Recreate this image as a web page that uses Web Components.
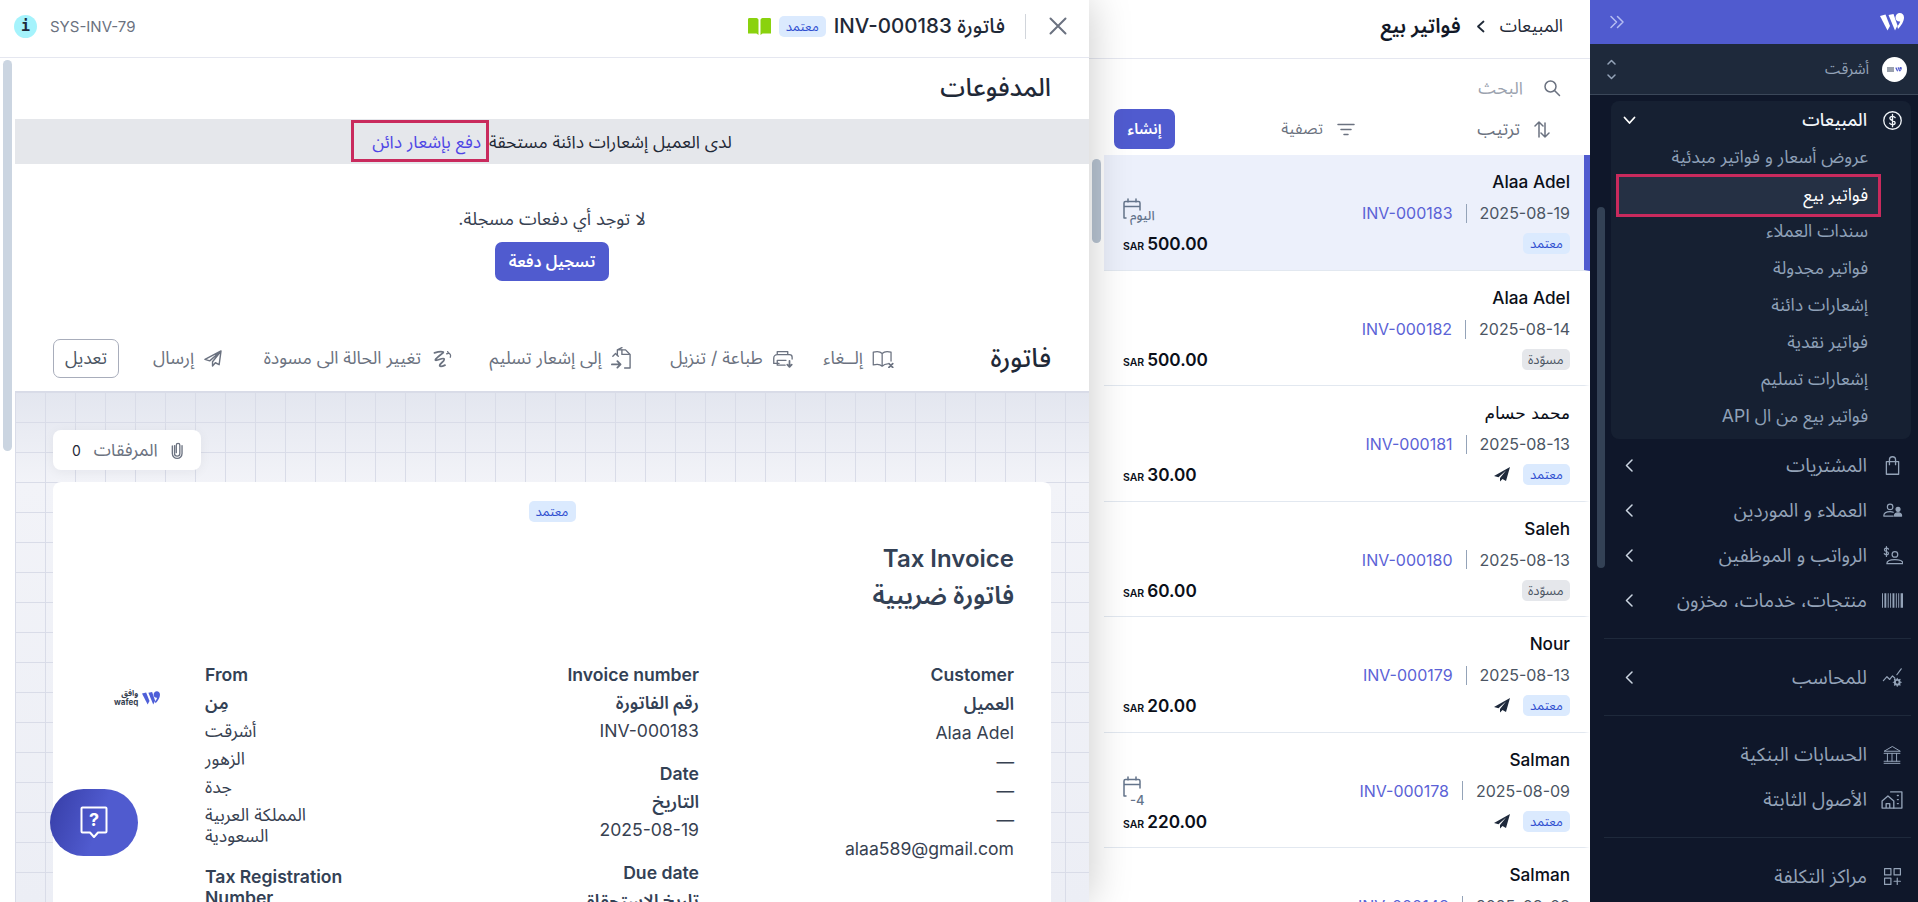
<!DOCTYPE html>
<html lang="ar" dir="rtl">
<head>
<meta charset="utf-8">
<title>فواتير بيع</title>
<style>
  html, body { margin: 0; height: 902px; overflow: hidden; background: #fff; }
  body { font-family: Inter, "Noto Sans Arabic", "Noto Sans", "DejaVu Sans", sans-serif; font-size: 16px; }
</style>
</head>
<body>
<app-shell>
  <app-sidebar slot="sidebar"></app-sidebar>
  <invoice-list slot="list"></invoice-list>
  <invoice-drawer slot="drawer"></invoice-drawer>
</app-shell>
<help-fab></help-fab>

<script>
// Icons shared by the components below.
const svg = (w, h, box, body, extra = '') =>
  `<svg width="${w}" height="${h}" viewBox="${box}" fill="none" stroke="currentColor" stroke-width="1.5" stroke-linecap="round" stroke-linejoin="round" ${extra}>${body}</svg>`

const wafeqMark = (w, h, color) =>
  `<svg width="${w}" height="${h}" viewBox="0 0 24 18" fill="${color}"><path d="M0 3 5.500 1.500 10 13l-2.500 4.500z"/><path d="M8.500 2 13.500 1 17.500 12.500 15 17.500z"/><path d="M15.500 4.500c0-2.500 2-4.500 4.300-4.500S24 1.700 24 4.500c0 4-3 8.500-6 11.500l-.7-2.500c1.300-1.500 2.400-3.300 2.900-5-2.200.5-4.700-1-4.700-4z"/></svg>`

const navIcons = {
  dollar: svg(21, 21, '0 0 24 24', '<circle cx="12" cy="12" r="10"/><path d="M15 8.700C14.400 7.700 13.300 7.200 12 7.200c-1.700 0-3 .9-3 2.300 0 3.200 6 1.800 6 5 0 1.400-1.400 2.300-3 2.300-1.400 0-2.600-.5-3.200-1.600M12 5v14"/>'),
  bag: svg(21, 21, '0 0 24 24', '<path d="M5 7.500h14v14.500H5z"/><path d="M8.500 11V5.500a3.500 3.500 0 0 1 7 0V11"/>'),
  people: svg(21, 19, '0 0 26 24', '<circle cx="10" cy="7.500" r="3.500"/><path d="M2 19c0-4 3.500-5.500 8-5.500 1.500 0 3 .2 4 .7M2 19h12"/><circle cx="20" cy="10.500" r="2.500" fill="currentColor"/><path d="M15.500 19c0-2.500 2-4 4.500-4s4.500 1.500 4.500 4z" fill="currentColor"/>'),
  payroll: svg(21, 20, '0 0 26 24', '<path d="M8 3.500C7.500 2.600 6.500 2.200 5.500 2.200 4 2.200 3 3 3 4.200c0 2.800 5 1.600 5 4.300C8 9.800 6.800 10.500 5.500 10.500c-1.200 0-2.200-.5-2.700-1.400M5.500 .5v12"/><circle cx="16" cy="10" r="3.500"/><path d="M6 21.500c0-3.500 4.500-5 10-5s10 1.500 10 5z"/>'),
  barcode: `<svg width="21" height="15" viewBox="0 0 22 15" fill="currentColor"><path d="M0 0h1v15H0zM2.500 0h2v15h-2zM6 0h1v15H6zM8.500 0h1v15h-1zM11 0h2v15h-2zM14.500 0h1v15h-1zM17 0h1v15h-1zM19.500 0h2.500v15h-2.500z"/></svg>`,
  gear: svg(21, 19, '0 0 26 24', '<path d="M1.500 16 6 11l3.500 3.500L13 10l3 3M18.500 8.500 24 1"/><circle cx="19" cy="18" r="3" stroke-width="2.500"/><path d="M19 13v1.500M19 21.500V23M14 18h1.500M22.500 18H24M15.500 14.500l1 1M21.500 20.500l1 1M22.500 14.500l-1 1M16.500 20.500l-1 1"/>'),
  bank: svg(20, 20, '0 0 24 24', '<path d="M12 2 2.500 7.500h19zM2.500 10h19M2.500 22h19M2.500 19.500h19M6.500 10v9.500M12 10v9.500M17.500 10v9.500" stroke-width="1.200"/>'),
  building: svg(22, 18, '0 0 24 20', '<path d="M1 19v-8l6.500-5.500L14 11v8zM5.500 19v-5h4v5"/><path d="M10.500 1H23v18h-9M18 5h1M18 9.500h1M18 14h1"/>'),
  plusgrid: svg(19, 19, '0 0 24 24', '<rect x="2" y="2" width="8" height="8"/><rect x="14" y="2" width="8" height="8"/><rect x="2" y="14" width="8" height="8"/><path d="M18 14v8M14 18h8"/>')
}

const actionIcons = {
  cancel: svg(22, 18, '0 0 26 21', '<path d="M12 4C9.500 1.500 5 1.500 1.500 2.500v15c3.500-1 8-1 10.500 1.500 2.500-2.500 5-2.800 6.500-2.800M12 4c2.500-2.500 7-2.500 10.500-1.500V13M12 4v15"/><path d="M20 16l4.500 4.500M24.500 16 20 20.500" stroke-width="2"/>'),
  print: svg(21, 18, '0 0 24 20', '<path d="M6 5V1.500h12V5M8 15H2V9a4 4 0 0 1 4-4h14a3 3 0 0 1 3 3v2M6 11.500h10M6 11.500V17h9"/><path d="M20 12v7M17.500 16.500 20 19l2.500-2.500" stroke-width="2"/>'),
  deliver: svg(20, 23, '0 0 22 25', '<path d="M7 9V3l5-2.500M7 3h9l5 5v15H15"/><path d="M12 3v5h8M2 10l3-3 3 3" /><path d="M1 19h9M7 15.500 10.500 19 7 22.500" stroke-width="2"/>'),
  revert: svg(21, 18, '0 0 24 20', '<path d="M4 3c3-1 8-2 10-1 1 1-8 6-9 9 0 2 9-3 10-1 1 3-6 5-5 8 1 1 4 0 6-1" stroke-width="2"/><path d="M20 3c2 1 3 3 2 5M19 1.500l1 2-2 .5"/>'),
  send: svg(18, 17, '0 0 19 18', '<path d="M18 1 1 10l5 1.500L18 1l-9 11.500V17l3-3.500 4 2z"/>')
}

/**
 * Two-column page frame. The drawer lies over the list through its shadow.
 */
customElements.define('app-shell', class extends HTMLElement {
  constructor () {
    super()
    this.attachShadow({ mode: 'open' }).innerHTML = `
      <style>
        :host { display: grid; grid-template-columns: 328px 501px 1089px; height: 902px; overflow: hidden; }
        ::slotted([slot="drawer"]) { position: relative; z-index: 2; }
      </style>
      <slot name="sidebar"></slot>
      <slot name="list"></slot>
      <slot name="drawer"></slot>`
  }
})

customElements.define('status-badge', class extends HTMLElement {
  constructor () {
    super()
    this.attachShadow({ mode: 'open' }).innerHTML = `
      <style>
        :host { display: inline-flex; align-items: center; justify-content: center; height: 21px; padding: 0 6px; min-width: 35px;
          border-radius: 5px; font-size: 13px; background: #dbeafe; color: #2f4fd0; line-height: 1; }
        :host([draft]) { background: #e5e7eb; color: #4b5563; padding: 0 6.500px; }
      </style>
      <slot></slot>`
  }
})

customElements.define('nav-item', class extends HTMLElement {
  constructor () {
    super()
    const chevron = this.hasAttribute('chevron')
      ? svg(8, 13, '0 0 8 13', '<path d="M7 1 1.500 6.500 7 12" stroke-width="1.500"/>', 'class="chev"') : ''
    this.attachShadow({ mode: 'open' }).innerHTML = `
      <style>
        :host { display: flex; align-items: center; height: 45px; color: #94a3b8; font-size: 19px; padding-left: 14px; white-space: nowrap; }
        .icon { width: 24px; display: flex; justify-content: center; margin-right: 7px; margin-left: 13px; }
        .chev { margin-right: auto; color: #cbd5e1; }
      </style>
      <span class="icon">${navIcons[this.getAttribute('icon')]}</span>
      <slot></slot>
      ${chevron}`
  }
})

customElements.define('sub-item', class extends HTMLElement {
  constructor () {
    super()
    this.attachShadow({ mode: 'open' }).innerHTML = `
      <style>
        :host { display: flex; align-items: center; height: 37px; box-sizing: border-box; padding-right: 13px; margin: 0 30px 0 5px;
          color: #8fa1b8; font-size: 17.600px; white-space: nowrap; }
        :host([active]) { height: 43px; margin-top: -2px; margin-bottom: -4px; border: 3px solid #c92a5d; padding-right: 10px;
          background: #253044; color: #fff; position: relative; }
      </style>
      <slot></slot>`
  }
})

customElements.define('app-sidebar', class extends HTMLElement {
  constructor () {
    super()
    this.attachShadow({ mode: 'open' }).innerHTML = `
      <style>
        :host { display: flex; flex-direction: column; height: 902px; background: #0f172a; overflow: hidden; }
        .brand { height: 44px; flex: none; background: #505bcf; display: flex; align-items: center; justify-content: space-between; padding: 0 14px 0 19px; box-sizing: border-box; color: #b6bdf2; }
        .org { height: 51px; flex: none; box-sizing: border-box; background: #1e293b; border-bottom: 1px solid #3b4759; display: flex; align-items: center; padding: 0 11px 0 17px; color: #94a3b8; font-size: 15px; }
        .avatar { width: 25px; height: 25px; border-radius: 50%; background: #fff; display: flex; align-items: center; justify-content: center; gap: 1px; margin-left: 13px; }
        .avatar i { width: 7px; height: 5px; background: #9aa1ad; }
        .updown { margin-right: auto; display: flex; color: #94a3b8; }
        .nav { flex: 1; display: flex; min-height: 0; }
        .main { width: 300px; margin-right: 7px; padding-top: 6px; }
        .gutter { width: 21px; margin-right: auto; }
        .thumb { width: 8px; margin: 112px 6px 0 0; height: 361px; border-radius: 4px; background: #334155; }
        .group { background: #162032; border-radius: 8px; padding-bottom: 3px; height: 338px; box-sizing: border-box; margin-bottom: 4px; }
        .group-head { height: 38px; display: flex; align-items: center; color: #f1f5f9; font-size: 17.600px; font-weight: 500; padding-left: 12px; }
        .group-head .icon { width: 24px; display: flex; justify-content: center; margin-right: 7px; margin-left: 13px; }
        .group-head .chev { margin-right: auto; color: #fff; }
        .rule { height: 1px; background: #1e293b; margin: 15px 0 16px -7px; }
      </style>
      <div class="brand">
        ${wafeqMark(24, 18, '#fff')}
        ${svg(16, 14, '0 0 16 14', '<path d="M2 1.500 7.500 7 2 12.500M8.500 1.500 14 7 8.500 12.500"/>')}
      </div>
      <div class="org">
        <span class="avatar">${wafeqMark(7, 5, '#505bcf')}<i></i></span>
        <span>أشرقت</span>
        <span class="updown">${svg(9, 23, '0 0 9 23', '<path d="M1 6l3.500-3.500L8 6M1 17l3.500 3.500L8 17"/>')}</span>
      </div>
      <div class="nav">
        <div class="main">
          <div class="group">
            <div class="group-head">
              <span class="icon">${navIcons.dollar}</span>
              <span>المبيعات</span>
              ${svg(13, 9, '0 0 13 9', '<path d="M1.500 1.500 6.500 7l5-5.500" stroke-width="1.800"/>', 'class="chev"')}
            </div>
            <sub-item>عروض أسعار و فواتير مبدئية</sub-item>
            <sub-item active>فواتير بيع</sub-item>
            <sub-item>سندات العملاء</sub-item>
            <sub-item>فواتير مجدولة</sub-item>
            <sub-item>إشعارات دائنة</sub-item>
            <sub-item>فواتير نقدية</sub-item>
            <sub-item>إشعارات تسليم</sub-item>
            <sub-item>فواتير بيع من ال API</sub-item>
          </div>
          <nav-item icon="bag" chevron>المشتريات</nav-item>
          <nav-item icon="people" chevron>العملاء و الموردين</nav-item>
          <nav-item icon="payroll" chevron>الرواتب و الموظفين</nav-item>
          <nav-item icon="barcode" chevron>منتجات، خدمات، مخزون</nav-item>
          <div class="rule"></div>
          <nav-item icon="gear" chevron>للمحاسب</nav-item>
          <div class="rule"></div>
          <nav-item icon="bank">الحسابات البنكية</nav-item>
          <nav-item icon="building">الأصول الثابتة</nav-item>
          <div class="rule"></div>
          <nav-item icon="plusgrid">مراكز التكلفة</nav-item>
        </div>
        <div class="gutter"><div class="thumb"></div></div>
      </div>`
  }
})

/**
 * One row of the invoice list, filled from its attributes.
 */
customElements.define('invoice-row', class extends HTMLElement {
  constructor () {
    super()
    const attr = name => this.getAttribute(name)
    const due = attr('due')
      ? `<span class="due">${svg(18, 21, '0 0 18 21', '<path d="M5 1v3M13 1v3M1 20V5a1.500 1.500 0 0 1 1.500-1.500h13A1.500 1.500 0 0 1 17 5v7M1 8.500h16M1 20h2"/>')}<span class="due-label" dir="${attr('due-dir') || 'rtl'}">${attr('due')}</span></span>`
      : ''
    const plane = this.hasAttribute('sent')
      ? `<svg class="plane" width="16" height="15" viewBox="0 0 16 15" fill="#1e293b"><path d="M16 0 0 9l4.500 1.300L12 3.500 6 11v3.500L8.500 12l3.500 2z"/></svg>`
      : ''
    this.attachShadow({ mode: 'open' }).innerHTML = `
      <style>
        :host { display: block; box-sizing: border-box; height: 115.400px; padding: 15px 14px 0 19px; border-right: 6px solid transparent; border-bottom: 1px solid #e2e8f0; }
        :host([selected]) { background: #ecf0fb; border-right-color: #505bcf; height: 116px; }
        .name { font-size: 17.200px; line-height: 24px; font-weight: 500; color: #0b0f19; }
        .name.naskh { font-family: "DejaVu Sans", sans-serif; font-weight: 400; font-size: 17px; }
        .meta { display: flex; align-items: center; height: 24px; margin-top: 7px; font-size: 16px; color: #4b5563; }
        .sep { width: 1px; height: 19px; background: #94a3b8; margin: 0 13px; }
        .num { color: #5b62d6; }
        .due { margin-right: auto; position: relative; width: 32px; height: 24px; color: #64748b; display: block; }
        .due svg { position: absolute; left: 0; top: -3px; }
        .due-label { position: absolute; left: 7px; bottom: -5px; font-size: 13px; font-weight: 500; white-space: nowrap; }
        .foot { display: flex; align-items: center; height: 21px; margin-top: 8px; }
        .plane { margin-right: 13px; }
        .amount { margin-right: auto; display: flex; align-items: baseline; gap: 3px; direction: ltr; color: #0b0f19; font-size: 17.200px; font-weight: 600; }
        .cur { font-size: 10.500px; font-weight: 600; }
      </style>
      <div class="name ${this.hasAttribute('naskh') ? 'naskh' : ''}">${attr('name')}</div>
      <div class="meta"><span>${attr('date')}</span><span class="sep"></span><span class="num">${attr('num')}</span>${due}</div>
      <div class="foot">
        <status-badge ${attr('status') === 'draft' ? 'draft' : ''}>${attr('status') === 'draft' ? 'مسوّدة' : 'معتمد'}</status-badge>
        ${plane}
        <span class="amount"><span class="cur">SAR</span><span>${attr('amount')}</span></span>
      </div>`
  }
})

customElements.define('invoice-list', class extends HTMLElement {
  constructor () {
    super()
    this.attachShadow({ mode: 'open' }).innerHTML = `
      <style>
        :host { display: flex; flex-direction: column; height: 902px; background: #fff; overflow: hidden; }
        .crumbs { height: 59px; flex: none; box-sizing: border-box; border-bottom: 1px solid #e5e7f0; display: flex; align-items: center; padding: 0 27px 5px 0; gap: 15px; color: #1f2937; font-size: 17.600px; }
        .crumbs b { font-size: 20.500px; font-weight: 600; color: #111827; }
        .search { height: 50px; flex: none; display: flex; align-items: center; padding: 8px 29px 0 0; box-sizing: border-box; gap: 20px; color: #9ca3af; font-size: 17.400px; }
        .search svg { color: #6b7280; }
        .tools { height: 46px; flex: none; display: flex; align-items: flex-start; justify-content: space-between; padding: 0 40px 0 25px; color: #6b7280; font-size: 17.600px; }
        .tool { display: flex; align-items: center; gap: 14px; height: 40px; }
        .tool.filter { margin-right: 16px; font-size: 16px; }
        .create { width: 61px; height: 40px; border-radius: 7px; background: #505bcf; color: #fff; font-size: 15px; font-weight: 600; display: flex; align-items: center; justify-content: center; }
        .body { flex: 1; display: flex; min-height: 0; }
        .rows { flex: 1; min-width: 0; }
        .gutter { width: 15px; flex: none; }
        .thumb { width: 9px; height: 84px; margin: 4px 3px 0; border-radius: 5px; background: #b8c4d2; }
      </style>
      <div class="crumbs">
        <span>المبيعات</span>
        ${svg(9, 13, '0 0 9 13', '<path d="M7.500 1.500 2 6.500l5.500 5" stroke-width="1.800"/>')}
        <b>فواتير بيع</b>
      </div>
      <div class="search">
        ${svg(18, 18, '0 0 18 18', '<circle cx="7.500" cy="7.500" r="5.500"/><path d="M11.500 11.500l5 5"/>')}
        <span>البحث</span>
      </div>
      <div class="tools">
        <span class="tool">${svg(16, 19, '0 0 16 19', '<path d="M5 17V2M1 6l4-4 4 4M11 3v14M7 13l4 4 4-4"/>')}<span>ترتيب</span></span>
        <span class="tool filter">${svg(18, 13, '0 0 18 13', '<path d="M1 1.500h16M4 6.500h10M7 11.500h4"/>')}<span>تصفية</span></span>
        <span class="create">إنشاء</span>
      </div>
      <div class="body">
        <div class="rows">
          <invoice-row selected name="Alaa Adel" date="2025-08-19" num="INV-000183" status="ok" amount="500.00" due="اليوم"></invoice-row>
          <invoice-row name="Alaa Adel" date="2025-08-14" num="INV-000182" status="draft" amount="500.00"></invoice-row>
          <invoice-row naskh name="محمد حسام" date="2025-08-13" num="INV-000181" status="ok" sent amount="30.00"></invoice-row>
          <invoice-row name="Saleh" date="2025-08-13" num="INV-000180" status="draft" amount="60.00"></invoice-row>
          <invoice-row name="Nour" date="2025-08-13" num="INV-000179" status="ok" sent amount="20.00"></invoice-row>
          <invoice-row name="Salman" date="2025-08-09" num="INV-000178" status="ok" sent amount="220.00" due="-4" due-dir="ltr"></invoice-row>
          <invoice-row name="Salman" date="2025-08-08" num="INV-000148" status="ok" sent amount="220.00"></invoice-row>
        </div>
        <div class="gutter"><div class="thumb"></div></div>
      </div>`
  }
})

customElements.define('action-button', class extends HTMLElement {
  constructor () {
    super()
    this.attachShadow({ mode: 'open' }).innerHTML = `
      <style>
        :host { display: inline-flex; align-items: center; gap: 9.500px; color: #6b7280; font-size: 17.600px; white-space: nowrap; }
        svg { flex: none; }
      </style>
      ${actionIcons[this.getAttribute('icon')]}
      <slot></slot>`
  }
})

customElements.define('detail-line', class extends HTMLElement {
  constructor () {
    super()
    this.attachShadow({ mode: 'open' }).innerHTML = `
      <style>
        :host { display: block; padding: 3.500px 0; line-height: 21px; font-size: 17.600px; color: #374151; }
        :host([label]) { font-weight: 600; color: #334155; }
        :host([gap]) { margin-top: 15px; }
        :host([wide]) { padding: 4px 0; }
      </style>
      <slot></slot>`
  }
})

customElements.define('invoice-card', class extends HTMLElement {
  constructor () {
    super()
    this.attachShadow({ mode: 'open' }).innerHTML = `
      <style>
        :host { display: block; flex: none; background: #fff; border-radius: 8px 8px 0 0; padding: 19px 37px 0 61px; }
        .center { display: flex; justify-content: center; margin-left: -24px; }
        h2 { margin: 0; font-size: 24px; line-height: 36px; font-weight: 600; color: #334155; }
        h2.ar { font-size: 25px; }
        .titles { margin-top: 19px; }
        .cols { margin-top: 47px; display: grid; grid-template-columns: 315px 344px 150px 91px; }
        .from { text-align: left; }
        .logo { display: flex; justify-content: flex-start; align-items: center; gap: 4px; direction: ltr; height: 20px; margin-top: 28px; }
        .logo span { display: flex; flex-direction: column; align-items: flex-end; font-size: 8px; line-height: 9px; font-weight: 700; color: #374151; }
      </style>
      <div class="center"><status-badge>معتمد</status-badge></div>
      <div class="titles"><h2>Tax Invoice</h2><h2 class="ar">فاتورة ضريبية</h2></div>
      <div class="cols">
        <div>
          <detail-line label wide>Customer</detail-line>
          <detail-line label wide>العميل</detail-line>
          <detail-line wide>Alaa Adel</detail-line>
          <detail-line wide>—</detail-line>
          <detail-line wide>—</detail-line>
          <detail-line wide>—</detail-line>
          <detail-line wide>alaa589@gmail.com</detail-line>
        </div>
        <div>
          <detail-line label>Invoice number</detail-line>
          <detail-line label>رقم الفاتورة</detail-line>
          <detail-line>INV-000183</detail-line>
          <detail-line label gap>Date</detail-line>
          <detail-line label>التاريخ</detail-line>
          <detail-line>2025-08-19</detail-line>
          <detail-line label gap>Due date</detail-line>
          <detail-line label>تاريخ الاستحقاق</detail-line>
        </div>
        <div class="from">
          <detail-line label>From</detail-line>
          <detail-line label>مِن</detail-line>
          <detail-line>أشرقت</detail-line>
          <detail-line>الزهور</detail-line>
          <detail-line>جدة</detail-line>
          <detail-line>المملكة العربية السعودية</detail-line>
          <detail-line label gap style="margin-top:13px">Tax Registration Number</detail-line>
        </div>
        <div class="logo"><span><i style="font-style:normal">وافق</i><i style="font-style:normal">wafeq</i></span>${wafeqMark(18, 14, '#4f5fd8')}</div>
      </div>`
  }
})

customElements.define('invoice-drawer', class extends HTMLElement {
  constructor () {
    super()
    this.attachShadow({ mode: 'open' }).innerHTML = `
      <style>
        :host { display: flex; flex-direction: column; height: 902px; background: #fff; box-shadow: 0 0 40px rgba(0, 0, 0, .22); overflow: hidden; }
        header { height: 58px; flex: none; box-sizing: border-box; border-bottom: 1px solid #e5e7f0; display: flex; align-items: center; padding: 0 22px 5px 14px; }
        header .close { color: #6b7280; }
        header .bar { width: 1px; height: 25px; background: #d1d5db; margin: 0 23px 0 20px; }
        header h1 { margin: 0 0 0 8px; font-size: 20.500px; font-weight: 500; color: #1f2937; }
        header .book { margin-right: 8px; }
        .sys { margin-right: auto; display: flex; align-items: center; gap: 13px; direction: ltr; color: #6b7280; font-size: 15px; }
        .sys i { width: 23px; height: 23px; border-radius: 50%; background: #a5f3fc; color: #1e293b; font: 700 15px "DejaVu Sans Mono", monospace; display: flex; align-items: center; justify-content: center; }
        .body { flex: 1; display: flex; min-height: 0; }
        .gutter { width: 15px; flex: none; }
        .thumb { width: 9px; height: 391px; margin: 2px 3px 0; border-radius: 5px; background: #cbd5e1; }
        main { flex: 1; min-width: 0; display: flex; flex-direction: column; }
        .heading { height: 61px; flex: none; display: flex; align-items: center; padding: 0 38px 2px 0; box-sizing: border-box; font-size: 25px; font-weight: 500; color: #1f2937; }
        .band { height: 45px; flex: none; box-sizing: border-box; padding-top: 1px; background: #e5e7eb; display: flex; align-items: center; justify-content: center; gap: 8px; color: #1f2937; font-size: 17.400px; }
        .link { color: #4f46e5; position: relative; }
        .link::after { content: ""; position: absolute; top: 50%; margin-top: -22px; height: 42px; box-sizing: border-box; right: -8px; left: -21px; border: 3px solid #c92a5d; }
        .empty { height: 162px; flex: none; box-sizing: border-box; padding-top: 43px; display: flex; flex-direction: column; align-items: center; gap: 11px; color: #374151; font-size: 18px; }
        .empty p { margin: 0; line-height: 24px; }
        .primary { width: 114px; height: 39px; border-radius: 7px; background: #505bcf; color: #fff; font-size: 16px; font-weight: 600; display: flex; align-items: center; justify-content: center; }
        .toolbar { height: 66px; flex: none; box-sizing: border-box; display: flex; align-items: center; padding: 0 38px; border-bottom: 1px solid #d8dbe7; }
        .toolbar h3 { margin: 0 0 0 auto; font-size: 26px; font-weight: 500; color: #1f2937; }
        .acts { display: flex; align-items: center; }
        .edit { width: 66px; height: 39px; box-sizing: border-box; border: 1px solid #a8adbb; border-radius: 7px; color: #4b5563; font-size: 17.600px; display: flex; align-items: center; justify-content: center; }
        .paper { flex: 1; min-height: 0; padding: 38px 38px 0; overflow: hidden; display: flex; flex-direction: column;
          background-color: #eef0f6;
          background-image: linear-gradient(#d9dce8 1px, transparent 1px), linear-gradient(90deg, #d9dce8 1px, transparent 1px), linear-gradient(#e3e6ef, #f2f3f8 90px, #eceef5);
          background-size: 30px 30px, 30px 30px, 100% 100%; }
        .chip { flex: none; align-self: flex-end; width: 148px; height: 40px; box-sizing: border-box; border-radius: 8px; background: #fff; display: flex; align-items: center; padding: 0 18px 0 19px; gap: 13px; color: #6b7280; font-size: 17.400px; box-shadow: 0 2px 12px rgba(15, 23, 42, .05); margin-bottom: 12px; }
        .chip .count { margin-right: auto; color: #1f2937; font-size: 14px; }
      </style>
      <header>
        ${svg(18, 18, '0 0 18 18', '<path d="M1.500 1.500l15 15M16.500 1.500l-15 15" stroke-width="2"/>', 'class="close"')}
        <span class="bar"></span>
        <h1>فاتورة INV-000183</h1>
        <status-badge style="width:47px;box-sizing:border-box">معتمد</status-badge>
        <svg class="book" width="23" height="17" viewBox="0 0 23 17" fill="#8ad20e"><path d="M0 1.500C0 .5.500 0 1.500 0h7C9.500 0 10.500 1 10.500 2v15l-2-1.500H0zM23 1.500C23 .5 22.500 0 21.500 0h-7c-1 0-2 1-2 2v15l2-1.500H23z"/></svg>
        <span class="sys"><i>i</i><span>SYS-INV-79</span></span>
      </header>
      <div class="body">
        <main>
          <div class="heading">المدفوعات</div>
          <div class="band"><span>لدى العميل إشعارات دائنة مستحقة</span><span class="link">دفع بإشعار دائن</span></div>
          <div class="empty">
            <p>لا توجد أي دفعات مسجلة.</p>
            <span class="primary">تسجيل دفعة</span>
          </div>
          <div class="toolbar">
            <h3>فاتورة</h3>
            <div class="acts">
              <action-button icon="cancel" style="margin-left:30px">إلــغاء</action-button>
              <action-button icon="print" style="margin-left:39px">طباعة / تنزيل</action-button>
              <action-button icon="deliver" style="margin-left:38px">إلى إشعار تسليم</action-button>
              <action-button icon="revert" style="margin-left:42px">تغيير الحالة الى مسودة</action-button>
              <action-button icon="send" style="margin-left:34px">إرسال</action-button>
              <span class="edit">تعديل</span>
            </div>
          </div>
          <div class="paper">
            <div class="chip">
              ${svg(14, 20, '0 0 14 20', '<path d="M4 5v9a3 3 0 0 0 6 0V4.500a2 2 0 0 0-4 0V13M1.500 5.500V14a5.500 5.500 0 0 0 11 0V5"/>')}
              <span>المرفقات</span>
              <span class="count">0</span>
            </div>
            <invoice-card></invoice-card>
          </div>
        </main>
        <div class="gutter"><div class="thumb"></div></div>
      </div>`
  }
})

/**
 * Floating help button, lies over the drawer.
 */
customElements.define('help-fab', class extends HTMLElement {
  constructor () {
    super()
    this.attachShadow({ mode: 'open' }).innerHTML = `
      <style>
        :host { position: fixed; left: 50px; top: 789px; width: 88px; height: 67px; border-radius: 34px; z-index: 5;
          background: linear-gradient(110deg, #363da6, #505bcf 55%); display: flex; align-items: center; justify-content: center; color: #fff; }
        text { font: 700 18px Inter, sans-serif; fill: #fff; stroke: none; }
      </style>
      <svg width="28" height="33" viewBox="0 0 28 33" fill="none" stroke="#fff" stroke-width="2" stroke-linejoin="round">
        <path d="M2.500 1.500h23a1 1 0 0 1 1 1v23a1 1 0 0 1-1 1H18l-4 4.500-4-4.500H2.500a1 1 0 0 1-1-1v-23a1 1 0 0 1 1-1z"/>
        <text x="14" y="20" text-anchor="middle">?</text>
      </svg>`
  }
})
</script>
</body>
</html>
